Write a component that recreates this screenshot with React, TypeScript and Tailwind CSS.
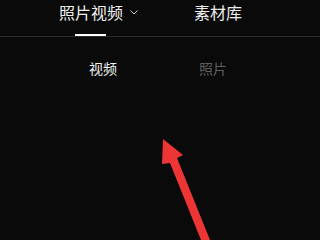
import { ReactNode } from 'react';

const cjk = { fontFamily: '"Noto Sans CJK SC", "Noto Sans", sans-serif' };

function TopTab({ children, active }: { children: ReactNode; active?: boolean }) {
  return (
    <div className="relative flex h-[36px] items-start">
      <span className="text-[16px] leading-6 text-[#ededed]">{children}</span>
      {active && <span className="absolute left-[16px] top-[34px] h-[2px] w-[31px] bg-white" />}
    </div>
  );
}

export default function App() {
  return (
    <div className="relative h-[240px] w-[320px] overflow-hidden bg-[#0a0a0a]" style={cjk}>
      {/* top tabs */}
      <div className="flex h-[36px] items-start pl-[59px]">
        <TopTab active>照片视频</TopTab>
        <svg className="ml-[7px] mt-[10px]" width="8" height="5" viewBox="0 0 8 5" fill="none">
          <path d="M0.5 0.5 L4 4 L7.5 0.5" stroke="#cfcfcf" strokeWidth="1" />
        </svg>
        <div className="ml-[56px]">
          <TopTab>素材库</TopTab>
        </div>
      </div>
      <div className="h-px w-full bg-[#2a2a2a]" />

      {/* sub tabs */}
      <div className="mt-[21px] flex text-[14px] leading-5">
        <span className="ml-[89px] text-[#f2f2f2]">视频</span>
        <span className="ml-[82px] text-[#5f5f5f]">照片</span>
      </div>

      {/* annotation arrow */}
      <svg className="absolute left-0 top-0" width="320" height="240" viewBox="0 0 320 240">
        <polygon
          points="163,139 183,155 177,158 210,240 201,240 170,163 162,164"
          fill="#ee3535"
        />
      </svg>
    </div>
  );
}
